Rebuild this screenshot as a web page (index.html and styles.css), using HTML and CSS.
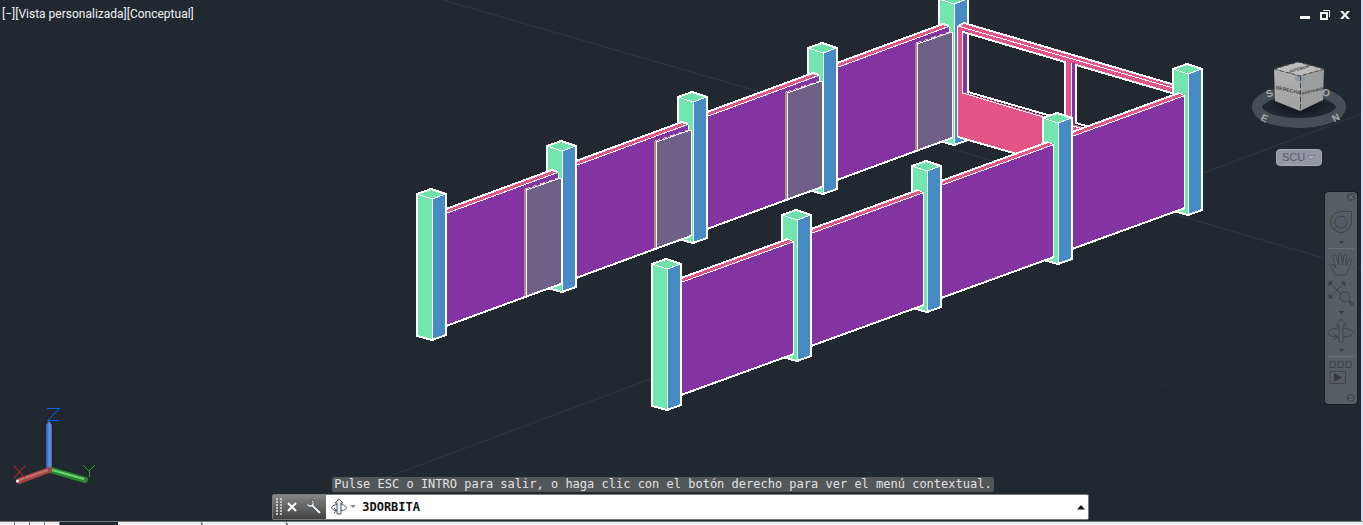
FILE: index.html
```html
<!DOCTYPE html>
<html lang="es">
<head>
<meta charset="utf-8">
<meta name="viewport" content="width=device-width, initial-scale=1">
<title>Vista personalizada</title>
<link rel="stylesheet" href="styles.css">
</head>
<body>
<div class="app">
<main class="viewport">
  <svg class="scene" viewBox="0 0 1361 521" preserveAspectRatio="xMidYMid slice" role="img" aria-label="Modelo 3D conceptual">
    <defs>
      <g id="post">
        <path class="green" d="M0 0 15 5V146L0 142Z"/>
        <path class="blue" d="M15 5 29 0V141L15 146Z"/>
        <path class="green-top" d="M0 0 14-5 29 0 15 5Z"/>
        <path class="thin" d="M0 0 15 5 29 0M15.500 5V146"/>
        <path class="edge" d="M0 0 14-5 29 0V141L15 146 0 142Z"/>
      </g>
      <g id="panel">
        <path class="pink" d="M29 14 136-25 142-23V-20L29 21Z"/>
        <path class="purple" d="M29 19 142-22V90L29 131Z"/>
        <path class="edge" d="M29 14 136-25M29 131 142 90"/>
        <path class="thin" d="M136-25 141.500-22V90M29 18.500 142-22.500"/>
      </g>
      <g id="door-panel">
        <path class="pink" d="M29 15 135-24 141-22 29 20Z"/>
        <path class="purple" d="M29 20 141-21V91L29 132Z"/>
        <path class="gray" d="M109-4 144-16V90L109 103Z"/>
        <path class="tan" d="M108-5V103"/>
        <path class="edge" d="M29 15 135-24 141-22M29 132 108 103 144 90"/>
        <path class="thin" d="M29 19.500 138-20.500M141.500-21V-16M109.500-4V103M109-4 144-16M144.500-16V90"/>
        <path class="tan-line" d="M108-5 141-16"/>
      </g>
      <linearGradient id="zaxis"><stop offset="0" stop-color="#2f5fae"/><stop offset=".6" stop-color="#6893e0"/><stop offset="1" stop-color="#3f6fc0"/></linearGradient>
    </defs>

    <g class="grid">
      <path d="M0 42 960 325 1361 443M0 33 90 0M0 427 400 277 620 194M250 137 620 0M1040 0 1361 95M1140 0 970 63M0 219 400 335 687 419 990 509M0 391 340 492M1361 312 1000 447 900 485"/>
      <path class="grid-major" d="M443 0 757 91 993 161 1361 269M1361 114 1203 173 640 383 345 493"/>
    </g>

    <use href="#post" x="939" y="-1"/>
    <g>
      <path class="pink" d="M958 137V26L963 23 1175 85V94L963 31V93L1100 132V178Z"/>
      <path class="void" d="M968 33 1175 94V152L968 92Z"/>
      <path class="purple" d="M963 31H968V92L963 93Z"/>
      <path class="pink" d="M1065 61H1071V125H1065Z"/>
      <path class="purple" d="M1071 63H1075V126H1071Z"/>
      <path class="pink" d="M963 92 1100 132V140L963 98Z"/>
      <path class="edge" d="M958 26 964 23 1175 85M963 32 1065 62M1076 65 1175 94M968 33V92L1065 120M1065 61V120M1076 64V123L1100 130M958 137 1100 178"/>
      <path class="thin" d="M957.500 137V26M958 26 1175 88.500M962.500 31V93L1100 134M1071.500 63V125"/>
    </g>
    <use href="#door-panel" x="808" y="48"/>
    <use href="#post" x="808" y="48"/>
    <use href="#door-panel" x="678" y="97"/>
    <use href="#post" x="678" y="97"/>
    <use href="#door-panel" x="547" y="146"/>
    <use href="#post" x="547" y="146"/>
    <use href="#door-panel" x="417" y="194"/>
    <use href="#post" x="417" y="194"/>

    <use href="#post" x="1173" y="69"/>
    <use href="#panel" x="1043" y="118"/>
    <use href="#post" x="1043" y="118"/>
    <use href="#panel" x="912" y="167"/>
    <use href="#post" x="912" y="166"/>
    <use href="#panel" x="782" y="215"/>
    <use href="#post" x="782" y="215"/>
    <use href="#panel" x="652" y="264"/>
    <use href="#post" x="652" y="264"/>

    <g class="axes">
      <path d="M46 425 49 421 52 425V470H46Z" fill="url(#zaxis)"/>
      <path d="M51 470 85 480" stroke="#2f8433" stroke-width="6" stroke-linecap="round"/>
      <path d="M52 470 84 479" stroke="#66d866" stroke-width="2"/>
      <path d="M49 470 19 481" stroke="#a24444" stroke-width="6" stroke-linecap="round"/>
      <path d="M48 470 19 480" stroke="#c47070" stroke-width="2"/>
      <circle cx="17.500" cy="481" r="1.500" fill="#fff"/>
      <path d="M47 408.500H59.500L47.500 420.500H59" stroke="#0b62f5"/>
      <path d="M14 466 25 478M25 466 14 478" stroke="#e52525"/>
      <path d="M83 465 89 471 95 465M89.500 471V477" stroke="#19a919"/>
    </g>
  </svg>

  <header class="titlebar">
    <nav class="view-controls" aria-label="Controles de ventana gráfica">
      <button type="button">[−]</button><button type="button">[Vista personalizada]</button><button type="button">[Conceptual]</button>
    </nav>
    <div class="window-controls">
      <button type="button" aria-label="Minimizar"><svg width="12" height="12" viewBox="0 0 12 12"><path d="M1 7H11V10H1Z" fill="#f4f4f0"/></svg></button>
      <button type="button" aria-label="Restaurar"><svg width="12" height="12" viewBox="0 0 12 12"><path d="M4 1.500H10.500V8" fill="none" stroke="#f4f4f0"/><path d="M2 4H8V10H2Z" fill="none" stroke="#f4f4f0" stroke-width="2"/></svg></button>
      <button type="button" aria-label="Cerrar"><svg width="12" height="12" viewBox="0 0 12 12"><path d="M1 2H4L6 4.500 8 2H11L7.500 6 11 10H8L6 7.500 4 10H1L4.500 6Z" fill="#f4f4f0"/></svg></button>
    </div>
  </header>

  <aside class="tools">
    <div class="compass">
      <svg width="98" height="70" viewBox="1250 59 98 70" role="img" aria-label="ViewCube">
        <defs>
          <radialGradient id="shade"><stop offset=".4" stop-color="#11161b" stop-opacity=".8"/><stop offset="1" stop-color="#11161b" stop-opacity="0"/></radialGradient>
          <linearGradient id="face" x2="0" y2="1"><stop offset="0" stop-color="#b2b2b2"/><stop offset="1" stop-color="#a1a1a1"/></linearGradient>
        </defs>
        <ellipse cx="1299" cy="107" rx="42" ry="16" fill="none" stroke="#484e55" stroke-width="10"/>
        <ellipse cx="1300" cy="105" rx="34" ry="13" fill="url(#shade)"/>
        <g class="compass-letters">
          <text x="1266" y="97" transform="rotate(-20 1269 93)">S</text><text x="1322" y="96" transform="rotate(20 1326 93)">O</text>
          <text x="1261" y="122" transform="rotate(25 1265 119)">E</text><text x="1332" y="121" transform="rotate(-28 1336 117)">N</text>
        </g>
        <path d="M1274 69 1298 62 1324 69 1300 76Z" fill="#bdbdbd"/>
        <path d="M1274 69 1300 76V111L1275 101Z" fill="url(#face)"/>
        <path d="M1300 76 1324 69 1323 100 1300 111Z" fill="#9c9d9e"/>
        <path d="M1295 74 1300 76 1305 75V81L1300 82 1295 80Z" fill="#9299a5"/>
        <path d="M1274 69 1300 76 1324 69M1274 69 1298 62 1324 69" fill="none" stroke="#4a4a4a" stroke-dasharray="4 2"/>
        <path d="M1300.500 76V111" stroke="#484848" stroke-dasharray="5 2"/>
        <g class="cube-letters">
          <text transform="translate(1276 89) skewY(13)">DERECHA</text>
          <text class="cube-small" transform="translate(1302 95) skewY(-14)">POSTERIOR</text>
          <text class="cube-small" transform="translate(1289 73) rotate(-15) skewX(-20)">SUPERIOR</text>
        </g>
      </svg>
      <button type="button" class="ucs">SCU <svg width="10" height="8" viewBox="0 0 10 8"><path d="M1 1.500H9L5 6Z" fill="#aeb0bd" stroke="#7e808a"/></svg></button>
    </div>

    <nav class="navbar" aria-label="Barra de navegación">
      <svg width="32" height="212" viewBox="0 0 32 212" fill="none" stroke="#3e4448" aria-hidden="true">
        <g>
          <circle cx="26" cy="5" r="4" fill="#464b4f" stroke="none"/><path d="M24 3 28 7M28 3 24 7" stroke="#70757a"/>
          <path d="M16 19.500H26.500V30A10.500 10.500 0 1 1 16 19.500Z"/><circle cx="16" cy="30" r="6" fill="#565c66"/><path d="M9 38 12 34M23 38 20 34"/>
          <path d="M14 49H19L16.500 52Z" fill="#34383c" stroke="none"/>
          <path d="M3 56.500H29" stroke="#6b7074"/>
          <path d="M10 83C9 78 6 75 4.500 73.500 5 71 8 72 11 76L8 65C8.500 62 10.500 63 11.500 66L14 73 13.500 63C14 60.500 16 61 16.500 63L17.500 73 19 63C20 61 22 62 21.500 65L20.500 74 24.500 67C26 65.500 27.500 67 26.500 69L23 78 20.500 83Z" fill="#596067"/>
          <path d="M5 91 19 105M19 91 5 105"/><path d="M4 94V90H8M16 90H20V94M4 102V106H8" fill="#34383c"/>
          <circle cx="20" cy="105" r="5" fill="#565c66"/><path d="M24 109 28 113" stroke-width="3"/>
          <path d="M14 119H19L16.500 122Z" fill="#34383c" stroke="none"/>
          <path d="M14 150V133H11L16 127 21 133H18V150Z" fill="#5b6065"/><path d="M14 136C-1 137 1 145 12 145M18 136C32 137 30 145 18 145M8 142 13 145 8 148" />
          <path d="M14 157H19L16.500 160Z" fill="#34383c" stroke="none"/>
          <path d="M3 164.500H29" stroke="#6b7074"/>
          <path d="M5 169.500H10V175.500H5ZM13 169.500H18V175.500H13ZM21 169.500H26V175.500H21ZM5 179.500H20.500V191.500H5Z"/><path d="M9 181 17 185.500 9 190Z" fill="#34383c" stroke="none"/>
          <circle cx="26" cy="206" r="4" fill="#464b4f" stroke="none"/><path d="M24 204.500H28M24.500 207H27.500L26 208.500Z" stroke="#70757a"/>
        </g>
      </svg>
      <div class="nav-targets">
        <button type="button" aria-label="Cerrar barra"></button>
        <button type="button" aria-label="SteeringWheel"></button>
        <button type="button" aria-label="Encuadre"></button>
        <button type="button" aria-label="Zoom"></button>
        <button type="button" aria-label="Órbita"></button>
        <button type="button" aria-label="ShowMotion"></button>
      </div>
    </nav>
  </aside>

  <section class="command">
    <p class="prompt">Pulse ESC o INTRO para salir, o haga clic con el botón derecho para ver el menú contextual.</p>
    <div class="command-line">
      <div class="command-grip">
        <svg width="6" height="18" viewBox="0 0 6 18" aria-hidden="true"><path d="M1 0V18M5 0V18" stroke="#c4c4c4" stroke-width="2" stroke-dasharray="2 1"/></svg>
        <button type="button" aria-label="Cerrar línea de comandos"><svg width="10" height="10" viewBox="0 0 10 10"><path d="M1 1 9 9M9 1 1 9" stroke="#fff" stroke-width="2"/></svg></button>
        <button type="button" class="wrench" aria-label="Personalizar"><svg width="16" height="16" viewBox="0 0 16 16"><path d="M4 1 6.500 3.500 5.500 5.500 3.500 6 1 3.500C0 7 3 9 6 8L12.500 14.500C14 15.500 15.500 14 14.500 12.500L8 6.500C9 3 7 .5 4 1Z" fill="#eef1f5" stroke="#39404a" stroke-width=".8"/></svg></button>
      </div>
      <button type="button" class="recent" aria-label="Comandos recientes"><svg width="25" height="18" viewBox="0 0 25 18"><g fill="none" stroke="#4a5260"><path d="M6 16V5H4L8 1 12 5H10V16Z" fill="#e9edf2"/><path d="M6 6.500C-1 7.500-1 11.500 5 12.500M10 6.500C18 7.500 17 12 10 12.500M3 10 6 12.500 3 15"/></g><path d="M19 7H25L22 10Z" fill="#8b8b8b"/></svg></button>
      <input class="command-input" type="text" value="3DORBITA" aria-label="Línea de comandos">
      <button type="button" class="history" aria-label="Historial"><svg width="8" height="5" viewBox="0 0 8 5"><path d="M0 4.500 4 0 8 4.500Z" fill="#151515"/></svg></button>
    </div>
  </section>
</main>
<footer class="sheet-tabs" aria-hidden="true">
  <div class="tab-arrows"><span></span><span></span><span></span><span></span></div>
  <div class="tab-list"><span></span><span></span></div>
</footer>
</div>
</body>
</html>
```
FILE: styles.css
```css
* { box-sizing: border-box; }
body { margin: 0; background: #212830; font-family: Roboto, "Noto Sans", sans-serif; }
button { margin: 0; padding: 0; border: 0; background: none; color: inherit; font: inherit; cursor: pointer; }
button svg { display: block; }
.app { display: flex; flex-direction: column; min-height: 100vh; }
.viewport { position: relative; flex: 1; display: flex; flex-direction: column; overflow: hidden; border-right: 2px solid #dcdfec; background: #212830; }

.scene { position: absolute; inset: 0; width: 100%; height: 100%; shape-rendering: crispEdges; }
.green { fill: #73e5ae; }
.green-top { fill: #6ee0aa; }
.blue { fill: #468bc3; }
.purple { fill: #8434a2; }
.pink { fill: #e25586; }
.gray { fill: #6f6087; }
.void { fill: #212830; }
.edge { fill: none; stroke: #fff; stroke-width: 2; }
.thin { fill: none; stroke: #fff; stroke-width: 1; }
.tan { stroke: #ae8c80; stroke-width: 2; }
.tan-line { stroke: #cfb9b5; stroke-dasharray: 5 3; }
.grid { fill: none; stroke: #252c38; shape-rendering: auto; }
.grid-major { stroke: #30384a; }
.axes { fill: none; shape-rendering: auto; }

.titlebar { position: relative; display: flex; justify-content: space-between; align-items: center; height: 28px; padding: 0 10px 0 2px; color: #f2f2f2; }
.view-controls { display: flex; font-size: 12px; line-height: 16px; }
.window-controls { display: flex; gap: 8px; padding-top: 2px; }

.tools { position: relative; display: flex; flex-direction: column; align-items: flex-end; padding-top: 31px; }
.compass { display: flex; flex-direction: column; align-items: center; gap: 20px; margin-right: 13px; }
.compass svg { display: block; }
.compass-letters { fill: #a5a8ac; font: bold 10px "Liberation Sans", sans-serif; }
.cube-letters { fill: #3c3d3f; font: bold 5px "Liberation Sans", sans-serif; }
.cube-small { font-size: 4px; }
.ucs { display: flex; align-items: center; justify-content: space-between; width: 46px; height: 17px; padding: 0 5px; border: 1px solid #a9abb7; border-radius: 4px; background: #9496a3; color: #5a5c64; font: 11px/15px "Liberation Sans", sans-serif; }
.navbar { display: grid; margin: 26px 4px 0 0; border-radius: 4px; background: #585d61; box-shadow: 0 0 0 1px #191e23; }
.navbar > * { grid-area: 1 / 1; }
.nav-targets { display: grid; grid-template-rows: 12px 44px 32px 34px 42px 48px; }

.command { position: relative; width: 60%; margin: auto auto 1px; }
.prompt { width: fit-content; margin: 0 0 2px 60px; padding: 0 2px; border-radius: 2px; background: #54575a; color: #e2e2e2; font: 12px/15px "DejaVu Sans Mono", monospace; white-space: nowrap; }
.command-line { display: flex; align-items: center; height: 26px; border: 1px solid #77797c; border-radius: 2px; background: #fff; }
.command-grip { display: flex; align-items: center; gap: 5px; align-self: stretch; width: 53px; padding-left: 3px; background: linear-gradient(#858585, #424242); }
.wrench { margin-left: 4px; }
.recent { margin-left: 5px; }
.command-input { flex: 1; min-width: 0; height: 20px; margin: 0; padding: 0 6px; border: 0; outline: 0; background: transparent; color: #111; font: bold 12px/20px "DejaVu Sans Mono", monospace; }
.history { padding: 6px 3px; }

.sheet-tabs { display: flex; gap: 58px; height: 4px; border-top: 1px solid #77787b; background: #212830; }
.tab-arrows { display: flex; width: 60px; background: #f2eff2; }
.tab-arrows span { width: 15px; border-right: 1px solid #77787b; }
.tab-list { display: flex; flex: 1; background: #f2eff2; }
.tab-list span { width: 85px; border-right: 2px solid #77787b; border-radius: 0 3px 0 0; }
```
